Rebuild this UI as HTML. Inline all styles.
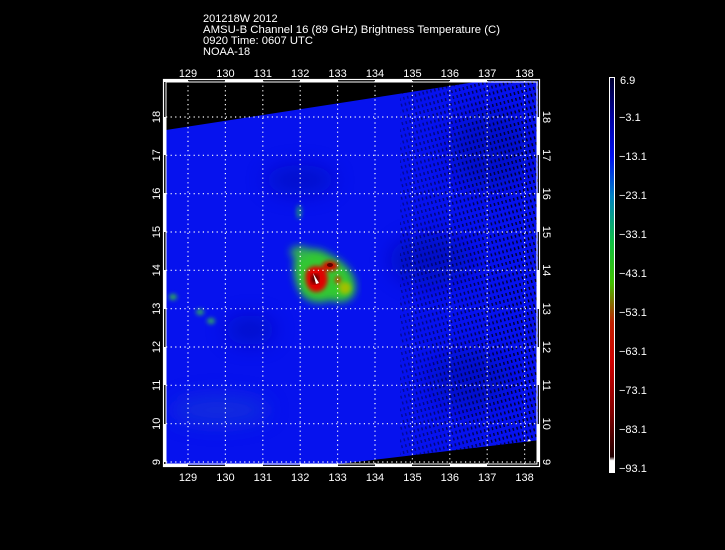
<!DOCTYPE html>
<html><head><style>
html,body{margin:0;padding:0;background:#000;width:725px;height:550px;overflow:hidden}
svg{display:block}
text{font-family:"Liberation Sans",sans-serif;fill:#fff}
</style></head><body>
<svg width="725" height="550" viewBox="0 0 725 550">
<defs>
<clipPath id="plot"><rect x="166" y="81" width="372" height="384"/></clipPath>
<clipPath id="swath"><polygon points="166,130 540,72 540,440 322,466 166,466"/></clipPath>
<pattern id="dots" width="4" height="6" patternUnits="userSpaceOnUse" patternTransform="rotate(-15)">
<rect x="0" y="0" width="1.4" height="3" fill="#000010"/>
</pattern>
<linearGradient id="fade" x1="0" x2="1" y1="0" y2="0">
<stop offset="0" stop-color="#fff" stop-opacity="0"/>
<stop offset="0.4" stop-color="#fff" stop-opacity="0"/>
<stop offset="0.75" stop-color="#fff" stop-opacity="0.6"/>
<stop offset="1" stop-color="#fff" stop-opacity="1"/>
</linearGradient>
<mask id="fm"><rect x="166" y="72" width="374" height="400" fill="url(#fade)"/></mask>
<filter id="b2"><feGaussianBlur stdDeviation="2"/></filter>
<filter id="b4"><feGaussianBlur stdDeviation="4"/></filter>
<filter id="b10"><feGaussianBlur stdDeviation="10"/></filter>
<linearGradient id="cb" x1="0" x2="0" y1="0" y2="1">
<stop offset="0" stop-color="#000030"/>
<stop offset="0.1" stop-color="#0000a0"/>
<stop offset="0.2" stop-color="#0010f0"/>
<stop offset="0.3" stop-color="#0080c0"/>
<stop offset="0.42" stop-color="#10c040"/>
<stop offset="0.52" stop-color="#40c000"/>
<stop offset="0.62" stop-color="#c02000"/>
<stop offset="0.72" stop-color="#d00000"/>
<stop offset="0.85" stop-color="#800000"/>
<stop offset="0.96" stop-color="#200000"/>
<stop offset="0.97" stop-color="#fff"/>
<stop offset="1" stop-color="#fff"/>
</linearGradient>
</defs>

<text x="203" y="22" font-size="11">201218W 2012</text>
<text x="203" y="33" font-size="11" textLength="297" lengthAdjust="spacingAndGlyphs">AMSU-B Channel 16 (89 GHz) Brightness Temperature (C)</text>
<text x="203" y="44" font-size="11" textLength="110" lengthAdjust="spacingAndGlyphs">0920 Time: 0607 UTC</text>
<text x="203" y="55" font-size="11">NOAA-18</text>

<g clip-path="url(#plot)">
<g clip-path="url(#swath)">
<rect x="160" y="60" width="390" height="420" fill="#0612ee"/>
<g filter="url(#b10)" opacity="0.7">
<ellipse cx="300" cy="180" rx="35" ry="15" fill="#0008c0"/>
<ellipse cx="430" cy="260" rx="40" ry="25" fill="#0008b8"/>
<ellipse cx="250" cy="330" rx="25" ry="15" fill="#0008c0"/>
<ellipse cx="470" cy="380" rx="40" ry="30" fill="#0008c0"/>
<ellipse cx="490" cy="150" rx="40" ry="40" fill="#0008c0"/>
<ellipse cx="220" cy="410" rx="50" ry="15" fill="#1838d8"/>
</g>
<g filter="url(#b2)">
<ellipse cx="299" cy="212" rx="2.5" ry="7" fill="#20a860" opacity="0.8"/>
<ellipse cx="173" cy="297" rx="4" ry="3" fill="#30b050"/>
<ellipse cx="200" cy="312" rx="4" ry="3" fill="#30a860"/>
<ellipse cx="211" cy="321" rx="4" ry="3" fill="#30a860"/>
</g>
<g filter="url(#b4)">
<path d="M296,255 C300,248 318,246 330,255 C345,262 358,275 355,292 C352,302 340,304 330,300 C320,305 305,302 300,292 C294,282 292,265 296,255Z" fill="#30c830"/>
<ellipse cx="300" cy="252" rx="10" ry="6" fill="#30b050"/>
</g>
<g filter="url(#b2)">
<path d="M306,272 C310,264 322,264 326,272 C330,280 326,292 316,292 C308,292 304,282 306,272Z" fill="#e00000"/>
<ellipse cx="330" cy="266" rx="8" ry="5" fill="#d01000"/>
<ellipse cx="345" cy="288" rx="6" ry="6" fill="#a0c000"/>
<ellipse cx="338" cy="280" rx="3" ry="4" fill="#c04000"/>
</g>
<ellipse cx="315" cy="279" rx="4" ry="5" fill="#400000" filter="url(#b2)"/>
<ellipse cx="330" cy="265" rx="3" ry="2" fill="#600000"/>
<polygon points="313,273 319,283 316,284" fill="#fff"/>
<rect x="400" y="60" width="150" height="420" fill="url(#dots)" mask="url(#fm)"/>
<polygon points="524,446 529,439 531,441 527,447" fill="#fff"/>
</g>
<g stroke="#fff" stroke-width="1.2" stroke-dasharray="1.2 3.4" fill="none">
<path d="M188 81V466M225.4 81V466M262.8 81V466M300.2 81V466M337.6 81V466M375 81V466M412.4 81V466M449.8 81V466M487.2 81V466M524.6 81V466"/>
<path d="M166 117H538M166 155.3H538M166 193.7H538M166 232H538M166 270.3H538M166 308.7H538M166 347H538M166 385.3H538M166 423.7H538M166 462H538"/>
</g>
</g>

<g fill="none" stroke="#fff">
<rect x="163.5" y="79.5" width="376" height="387" stroke-width="1.2"/>
<rect x="166" y="82" width="371" height="382" stroke-width="1"/>
</g>
<g fill="#fff">
<rect x="163" y="79" width="25" height="3"/><rect x="225" y="79" width="38" height="3"/><rect x="300" y="79" width="38" height="3"/><rect x="375" y="79" width="37" height="3"/><rect x="450" y="79" width="37" height="3"/>
<rect x="163" y="464" width="25" height="3"/><rect x="225" y="464" width="38" height="3"/><rect x="300" y="464" width="38" height="3"/><rect x="375" y="464" width="37" height="3"/><rect x="450" y="464" width="37" height="3"/>
<rect x="163" y="117" width="3" height="38"/><rect x="163" y="193" width="3" height="39"/><rect x="163" y="270" width="3" height="39"/><rect x="163" y="347" width="3" height="38"/><rect x="163" y="424" width="3" height="38"/>
<rect x="537" y="117" width="3" height="38"/><rect x="537" y="193" width="3" height="39"/><rect x="537" y="270" width="3" height="39"/><rect x="537" y="347" width="3" height="38"/><rect x="537" y="424" width="3" height="38"/>
</g>

<g font-size="11" text-anchor="middle">
<text x="188" y="77">129</text><text x="225.4" y="77">130</text><text x="262.8" y="77">131</text><text x="300.2" y="77">132</text><text x="337.6" y="77">133</text><text x="375" y="77">134</text><text x="412.4" y="77">135</text><text x="449.8" y="77">136</text><text x="487.2" y="77">137</text><text x="524.6" y="77">138</text>
<text x="188" y="481">129</text><text x="225.4" y="481">130</text><text x="262.8" y="481">131</text><text x="300.2" y="481">132</text><text x="337.6" y="481">133</text><text x="375" y="481">134</text><text x="412.4" y="481">135</text><text x="449.8" y="481">136</text><text x="487.2" y="481">137</text><text x="524.6" y="481">138</text>
</g>
<g font-size="11" text-anchor="middle">
<text transform="translate(160,117) rotate(-90)">18</text>
<text transform="translate(160,155.3) rotate(-90)">17</text>
<text transform="translate(160,193.7) rotate(-90)">16</text>
<text transform="translate(160,232) rotate(-90)">15</text>
<text transform="translate(160,270.3) rotate(-90)">14</text>
<text transform="translate(160,308.7) rotate(-90)">13</text>
<text transform="translate(160,347) rotate(-90)">12</text>
<text transform="translate(160,385.3) rotate(-90)">11</text>
<text transform="translate(160,423.7) rotate(-90)">10</text>
<text transform="translate(160,462) rotate(-90)">9</text>
<text transform="translate(543,117) rotate(90)">18</text>
<text transform="translate(543,155.3) rotate(90)">17</text>
<text transform="translate(543,193.7) rotate(90)">16</text>
<text transform="translate(543,232) rotate(90)">15</text>
<text transform="translate(543,270.3) rotate(90)">14</text>
<text transform="translate(543,308.7) rotate(90)">13</text>
<text transform="translate(543,347) rotate(90)">12</text>
<text transform="translate(543,385.3) rotate(90)">11</text>
<text transform="translate(543,423.7) rotate(90)">10</text>
<text transform="translate(543,462) rotate(90)">9</text>
</g>

<rect x="609.5" y="77.5" width="5" height="395" fill="url(#cb)" stroke="#fff" stroke-width="1"/>
<g font-size="11">
<text x="620" y="84">6.9</text>
<text x="619" y="121">−3.1</text>
<text x="619" y="160">−13.1</text>
<text x="619" y="199">−23.1</text>
<text x="619" y="238">−33.1</text>
<text x="619" y="277">−43.1</text>
<text x="619" y="316">−53.1</text>
<text x="619" y="355">−63.1</text>
<text x="619" y="394">−73.1</text>
<text x="619" y="433">−83.1</text>
<text x="619" y="472">−93.1</text>
</g>
</svg>
</body></html>
